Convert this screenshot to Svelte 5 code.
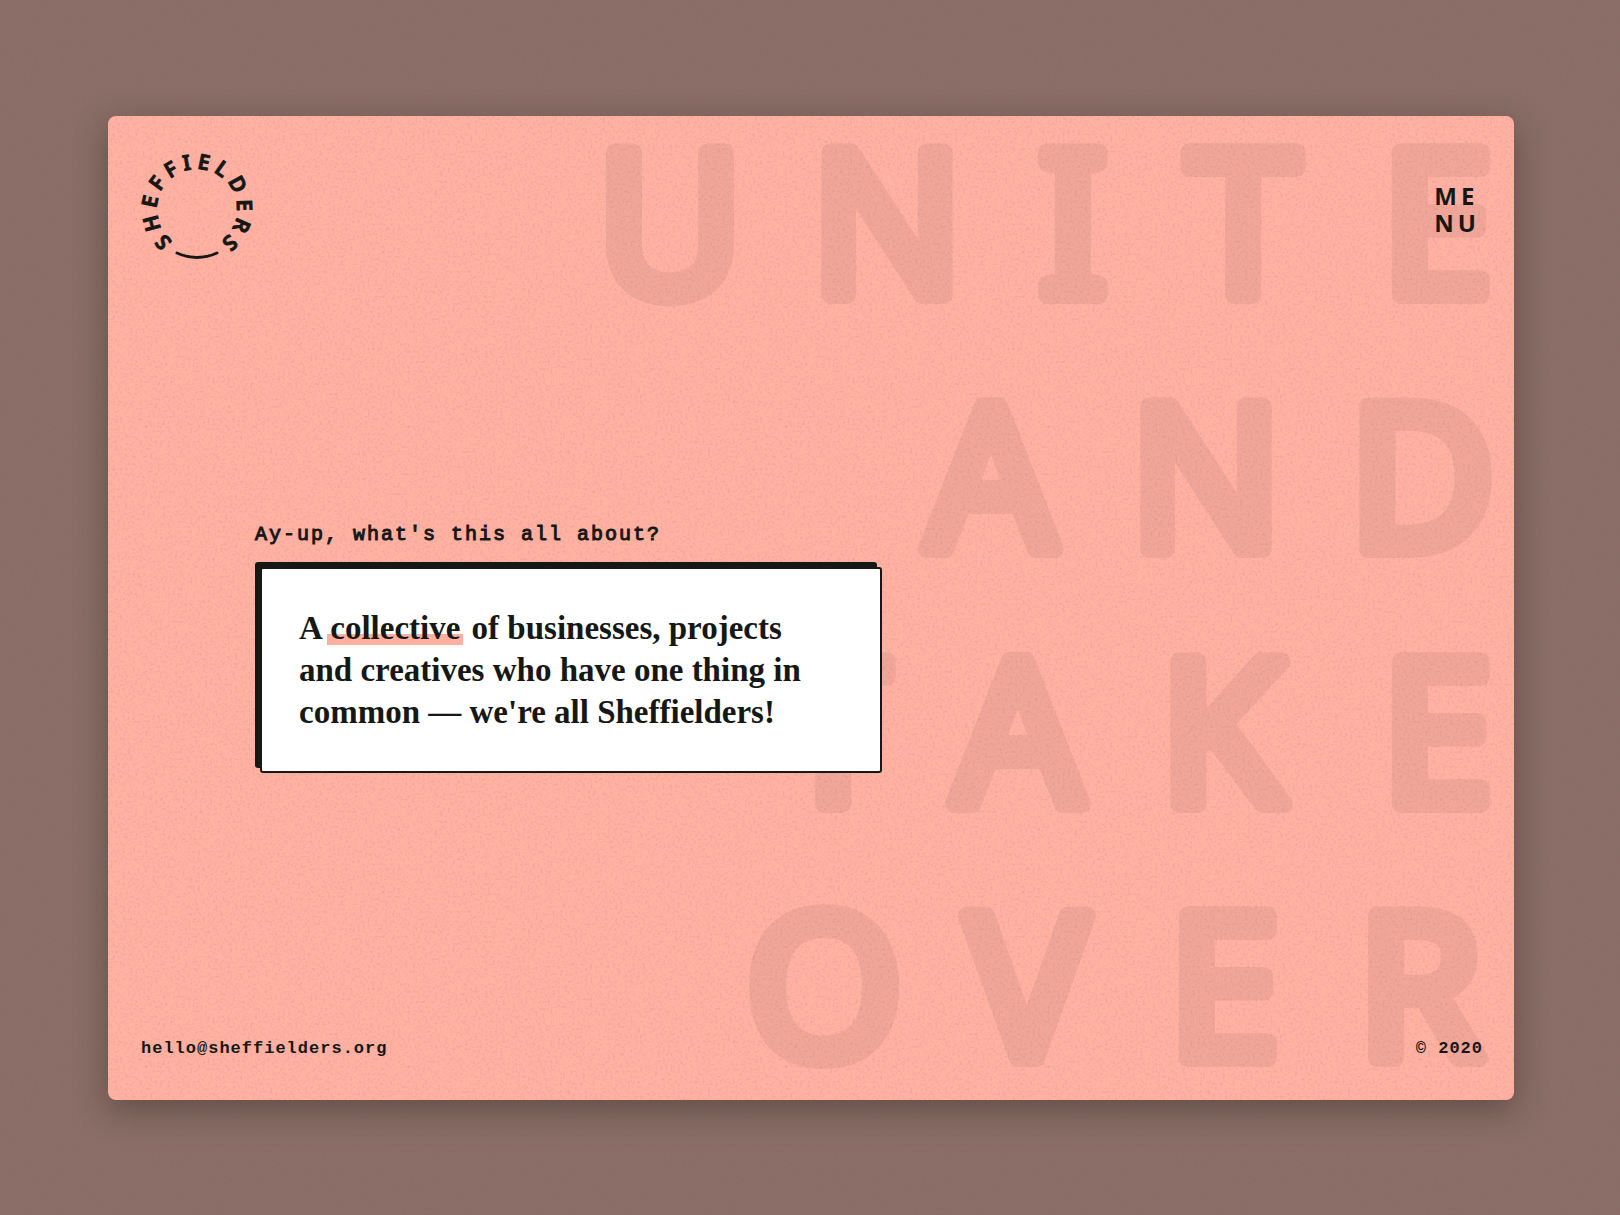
<script>
  // Poster lettering: x holds the centre of each letter, y the baseline.
  const words = [
    { text: 'UNITE', x: [562, 779, 965, 1135, 1329], y: 179 },
    { text: 'AND', x: [883, 1098, 1314], y: 433 },
    { text: 'TAKE', x: [725, 910, 1114, 1329], y: 688 },
    { text: 'OVER', x: [716, 919, 1116, 1312], y: 942 },
  ];
</script>

<svelte:head><title>Sheffielders</title></svelte:head>

<div class="page">
  <svg class="grain" aria-hidden="true">
    <filter id="page-noise" x="0" y="0" width="100%" height="100%">
      <feTurbulence type="fractalNoise" baseFrequency="0.5" numOctaves="2" seed="9" />
      <feColorMatrix values="0 0 0 0 0.2  0 0 0 0 0.1  0 0 0 0 0.1  0.8 0 0 0 -0.36" />
    </filter>
    <rect width="100%" height="100%" filter="url(#page-noise)" />
  </svg>

  <main class="panel">
    <svg class="words" viewBox="0 0 1406 984" preserveAspectRatio="xMaxYMid meet" aria-hidden="true">
      {#each words as word}
        <text x={word.x.join(' ')} y={word.y} text-anchor="middle">{word.text}</text>
      {/each}
    </svg>
    <svg class="grain" aria-hidden="true">
      <filter id="noise" x="0" y="0" width="100%" height="100%">
        <feTurbulence type="fractalNoise" baseFrequency="0.4" numOctaves="3" seed="4" />
        <feColorMatrix values="0 0 0 0 0.4  0 0 0 0 0.15  0 0 0 0 0.15  1.2 0 0 0 -0.58" />
      </filter>
      <rect width="100%" height="100%" filter="url(#noise)" />
    </svg>

    <header>
      <a class="logo" href="/" aria-label="Sheffielders">
        <svg viewBox="0 0 120 120">
          <path id="ring" d="M60 101a40 40 0 0 1 0-80a40 40 0 0 1 0 80" fill="none" />
          <text text-anchor="middle"><textPath href="#ring" startOffset="51%">SHEFFIELDERS</textPath></text>
          <path class="smile" d="M40 105Q60 114 80 105" />
        </svg>
      </a>
      <button type="button" class="menu">ME<br />NU</button>
    </header>

    <section>
      <h1>Ay-up, what's this all about?</h1>
      <p class="card">
        A <mark>collective</mark> of businesses, projects<br />
        and creatives who have one thing in<br />
        common — we're all Sheffielders!
      </p>
    </section>

    <footer>
      <a href="mailto:hello@sheffielders.org">hello@sheffielders.org</a>
      <span>© 2020</span>
    </footer>
  </main>
</div>

<style>
  :global(body) {
    margin: 0;
  }
  .page {
    position: relative;
    box-sizing: border-box;
    min-height: 100vh;
    display: grid;
    padding: 116px 106px 115px 108px;
    background: #8a6e67;
    color: #161816;
  }
  .grain {
    position: absolute;
    inset: 0;
    width: 100%;
    height: 100%;
    border-radius: 8px;
    pointer-events: none;
    opacity: 0.4;
  }
  .panel {
    position: relative;
    display: flex;
    flex-direction: column;
    justify-content: space-between;
    box-sizing: border-box;
    padding: 32px 31px 39px 33px;
    border-radius: 8px;
    background: #ffb1a2;
    box-shadow: 0 10px 32px rgb(40 30 25 / 40%);
  }
  .words {
    position: absolute;
    inset: 0;
    width: 100%;
    height: 100%;
    overflow: visible;
  }
  .words text {
    font: 400 200px 'Noto Sans', sans-serif;
    fill: #f0a698;
    stroke: #f0a698;
    stroke-width: 18px;
    stroke-linejoin: round;
  }
  header,
  footer {
    position: relative;
    display: flex;
    justify-content: space-between;
  }
  .logo {
    width: 120px;
    height: 120px;
    margin-left: -4px;
    color: inherit;
  }
  .logo svg {
    display: block;
    overflow: visible;
  }
  .logo text {
    font: 600 21px 'Noto Sans', sans-serif;
    letter-spacing: 5px;
    fill: #161816;
    stroke: #161816;
    stroke-linejoin: round;
  }
  .smile {
    fill: none;
    stroke: #161816;
    stroke-width: 3;
    stroke-linecap: round;
  }
  .menu {
    align-self: start;
    margin: 34px 0 0;
    padding: 0 3px;
    border: 0;
    background: none;
    color: inherit;
    font: 700 24px/27px 'Noto Sans', sans-serif;
    letter-spacing: 4px;
    text-align: left;
    cursor: pointer;
  }
  section {
    position: relative;
    align-self: flex-start;
    margin: 0 0 10px 114px;
    width: 627px;
    max-width: 100%;
  }
  h1 {
    margin: 0 0 20px;
    font: 400 20px/24px 'Liberation Mono', monospace;
    letter-spacing: 2px;
    -webkit-text-stroke: 1px;
  }
  .card {
    box-sizing: border-box;
    margin: 0 0 0 5px;
    padding: 38px 37px 38px;
    border: 2px solid #161816;
    border-radius: 3px;
    background: #fff;
    box-shadow: -5px -5px 0 #161816;
    font: 700 33px/42px 'Liberation Serif', serif;
  }
  mark {
    padding: 0 3px 2px;
    margin: 0 0 0 -2px;
    background: linear-gradient(transparent 63%, #ffb0a1 63%, #ffb0a1 92%, transparent 92%);
    color: inherit;
  }
  footer {
    font: 700 17px/24px 'Liberation Mono', monospace;
    letter-spacing: 1px;
  }
  footer a {
    color: inherit;
    text-decoration: none;
  }
</style>
